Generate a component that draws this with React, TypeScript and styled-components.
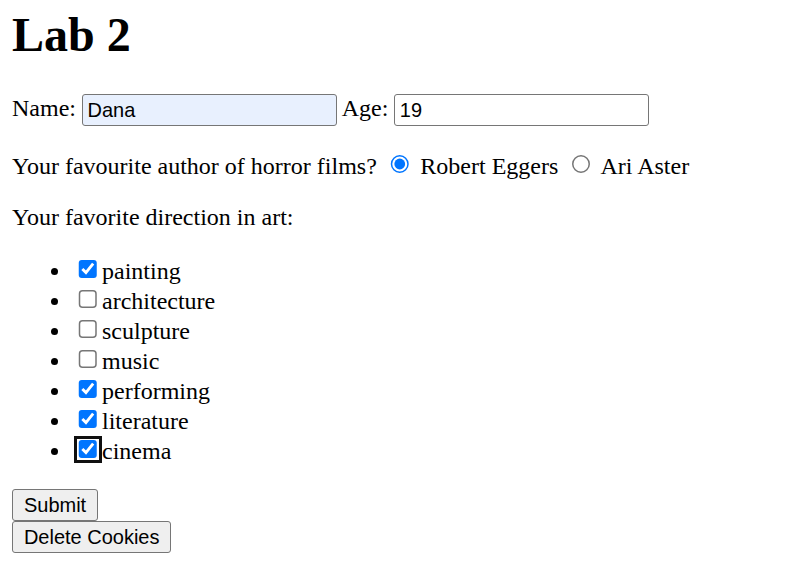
import React from "react";
import styled, { createGlobalStyle } from "styled-components";

const GlobalStyle = createGlobalStyle`
  html, body {
    margin: 0;
    padding: 0;
    background: #ffffff;
  }
  body {
    font-family: "Liberation Serif", "Times New Roman", serif;
    font-size: 16px;
    color: #000000;
  }
`;

const Page = styled.div`
  zoom: 1.5;
  padding: 4.7px 8px 8px 8px;
  font-family: "Liberation Serif", "Times New Roman", serif;
  font-size: 16px;
`;

const Title = styled.h1`
  font-size: 32px;
  font-weight: bold;
  margin: 0 0 21.44px 0;
`;

const Paragraph = styled.p`
  margin: 16px 0;
`;

const TextField = styled.input<{ $autofilled?: boolean }>`
  box-sizing: border-box;
  width: 170px;
  height: 21.33px;
  padding: 1px 3px;
  margin: 0;
  border: 1px solid #767676;
  border-radius: 2px;
  font-family: "Liberation Sans", Arial, sans-serif;
  font-size: 13.333px;
  color: #000000;
  background: ${(p) => (p.$autofilled ? "#e8f0fe" : "#ffffff")};
  outline: none;
`;

const Radio = styled.input`
  margin: 3px 3px 0 5px;
`;

const List = styled.ul`
  margin: 16px 0;
  padding-left: 40px;
`;

const Item = styled.li`
  list-style: disc;
`;

const Check = styled.input<{ $focused?: boolean }>`
  margin: 3px 3px 3px 4px;
  ${(p) =>
    p.$focused
      ? `outline: 2px solid #101010; outline-offset: 1px; border-radius: 3px;`
      : ""}
`;

const FormButton = styled.button`
  box-sizing: border-box;
  height: 21.33px;
  font-family: "Liberation Sans", Arial, sans-serif;
  font-size: 13.333px;
  color: #000000;
  background: #efefef;
  border: 1px solid #767676;
  border-radius: 2px;
  padding: 0 7.3px;
  margin: 0;
  line-height: normal;
`;

const arts: { name: string; checked: boolean }[] = [
  { name: "painting", checked: true },
  { name: "architecture", checked: false },
  { name: "sculpture", checked: false },
  { name: "music", checked: false },
  { name: "performing", checked: true },
  { name: "literature", checked: true },
  { name: "cinema", checked: true },
];

export default function App() {
  return (
    <>
      <GlobalStyle />
      <Page>
        <Title>Lab 2</Title>
        <form onSubmit={(e) => e.preventDefault()}>
          <Paragraph>
            Name: <TextField type="text" defaultValue="Dana" $autofilled /> Age:{" "}
            <TextField type="text" defaultValue="19" />
          </Paragraph>
          <Paragraph>
            Your favourite author of horror films?{" "}
            <Radio type="radio" name="author" defaultChecked /> Robert Eggers{" "}
            <Radio type="radio" name="author" /> Ari Aster
          </Paragraph>
          <Paragraph>Your favorite direction in art:</Paragraph>
          <List>
            {arts.map((a, i) => (
              <Item key={a.name}>
                <Check
                  type="checkbox"
                  defaultChecked={a.checked}
                  $focused={i === arts.length - 1}
                />
                {a.name}
              </Item>
            ))}
          </List>
          <FormButton type="submit">Submit</FormButton>
          <br />
          <FormButton type="button">Delete Cookies</FormButton>
        </form>
      </Page>
    </>
  );
}
